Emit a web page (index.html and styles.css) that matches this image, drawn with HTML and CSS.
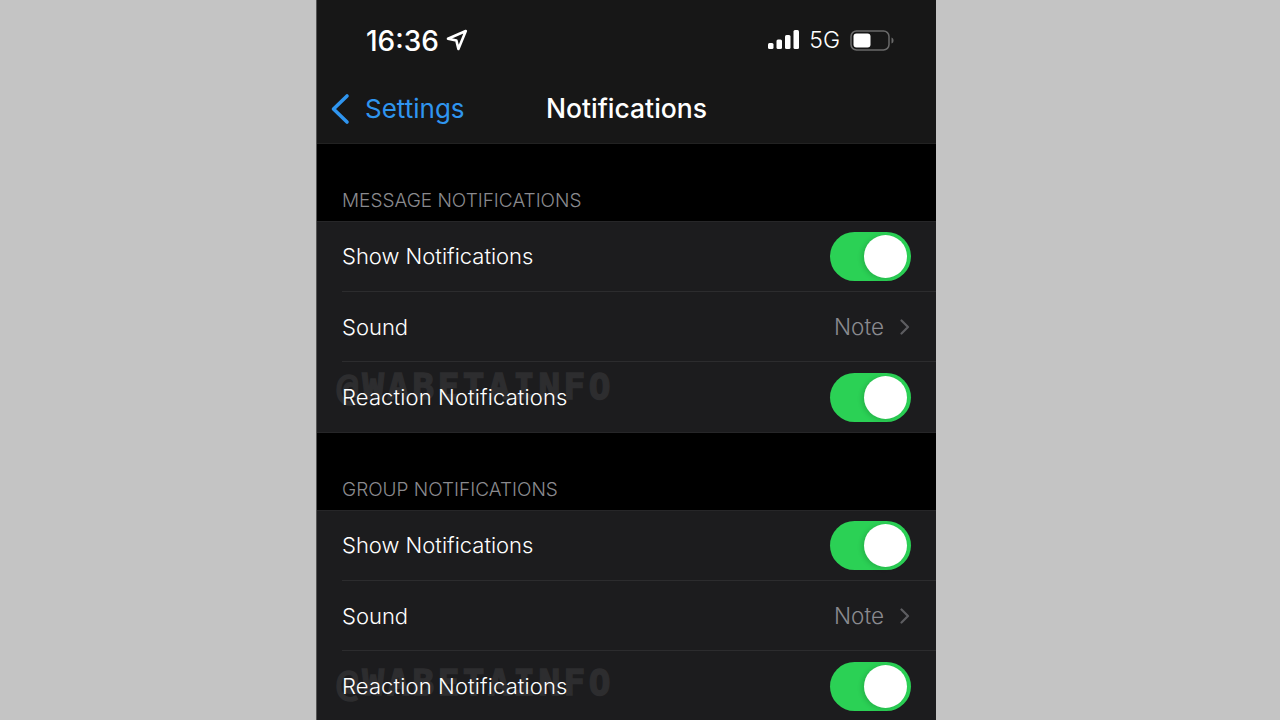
FILE: index.html
```html
<!DOCTYPE html>
<html lang="en">
<head>
    <meta charset="UTF-8">
    <meta name="viewport" content="width=device-width, initial-scale=1.0">
    <title>Notifications</title>
    <link rel="stylesheet" href="styles.css">
</head>
<body>
    <div class="phone">
        <div class="top-bar">
            <div class="status-bar">
                <div class="status-left">
                    <span class="clock">16:36</span>
                    <svg class="location" width="22" height="22" viewBox="0 0 22 22"><path d="M2 9.800 19.800 2 12.400 20 10.400 11.600Z" fill="none" stroke="#fff" stroke-width="2.600" stroke-linejoin="round"/></svg>
                </div>
                <div class="status-right">
                    <svg width="31" height="20" viewBox="0 0 31 20"><rect x="0" y="13" width="5.500" height="6" rx="1.500" fill="#fff"/><rect x="8.500" y="9.500" width="5.500" height="9.500" rx="1.500" fill="#fff"/><rect x="17" y="5" width="5.500" height="14" rx="1.500" fill="#fff"/><rect x="25.500" y="0" width="5.500" height="19" rx="1.500" fill="#fff"/></svg>
                    <span class="network">5G</span>
                    <svg class="battery" width="44" height="21" viewBox="0 0 44 21"><rect x="1" y="1" width="38" height="19" rx="5.500" fill="none" stroke="#6a6a6a" stroke-width="1.500"/><rect x="3.500" y="3.500" width="17" height="14" rx="3" fill="#fff"/><path d="M41.500 7.500c1.500.5 2 1.500 2 3s-.5 2.500-2 3z" fill="#6a6a6a"/></svg>
                </div>
            </div>
            <div class="nav-bar">
                <div class="back">
                    <svg width="20" height="32" viewBox="0 0 20 32"><path d="M17 3 3.500 16 17 29" fill="none" stroke="#2f95ef" stroke-width="3.600" stroke-linecap="round" stroke-linejoin="round"/></svg>
                    <span>Settings</span>
                </div>
                <div class="nav-title">Notifications</div>
            </div>
        </div>

        <div class="section-title">MESSAGE NOTIFICATIONS</div>
        <div class="group">
            <div class="watermark">@WABETAINFO</div>
            <div class="row"><span>Show Notifications</span><div class="switch"><div class="knob"></div></div></div>
            <div class="row"><span>Sound</span><div class="value">Note<svg width="10" height="16" viewBox="0 0 10 16"><path d="M1.500 1.500 8 8l-6.500 6.500" fill="none" stroke="#5d5d61" stroke-width="2.200" stroke-linecap="round" stroke-linejoin="round"/></svg></div></div>
            <div class="row"><span class="wide">Reaction Notifications</span><div class="switch"><div class="knob"></div></div></div>
        </div>

        <div class="section-title">GROUP NOTIFICATIONS</div>
        <div class="group">
            <div class="watermark second">@WABETAINFO</div>
            <div class="row"><span>Show Notifications</span><div class="switch"><div class="knob"></div></div></div>
            <div class="row"><span>Sound</span><div class="value">Note<svg width="10" height="16" viewBox="0 0 10 16"><path d="M1.500 1.500 8 8l-6.500 6.500" fill="none" stroke="#5d5d61" stroke-width="2.200" stroke-linecap="round" stroke-linejoin="round"/></svg></div></div>
            <div class="row"><span class="wide">Reaction Notifications</span><div class="switch"><div class="knob"></div></div></div>
        </div>
    </div>
</body>
</html>
```
FILE: styles.css
```css
body {
    margin: 0;
    height: 720px;
    overflow: hidden;
    background-color: #c4c4c4;
    font-family: Inter, "Liberation Sans", sans-serif;
}

.phone {
    width: 619px;
    height: 720px;
    margin-left: 317px;
    background-color: #000;
    color: #fff;
    overflow: hidden;
    box-shadow: -1px 0 0 #555;
}

/* Top bars */
.top-bar {
    height: 143px;
    background-color: #171717;
    border-bottom: 1px solid #222;
}

.status-bar {
    height: 76px;
    display: flex;
    justify-content: space-between;
    align-items: center;
    padding: 4px 42px 0 49px;
    box-sizing: border-box;
}

.status-left, .status-right {
    display: flex;
    align-items: center;
}

.clock {
    margin-top: 2px;
    font-size: 28px;
    font-weight: 500;
}

.location {
    margin-left: 7px;
}

.network {
    margin: 0 10px 0 10px;
    font-size: 23px;
    font-weight: 300;
}

.nav-bar {
    position: relative;
    height: 67px;
    display: flex;
    align-items: center;
    justify-content: center;
    padding-bottom: 2px;
    box-sizing: border-box;
}

.back {
    position: absolute;
    left: 13px;
    display: flex;
    align-items: center;
    gap: 15px;
    color: #2f95ef;
    font-size: 26px;
}

.nav-title {
    margin-bottom: 2px;
    font-size: 26.500px;
    font-weight: 500;
}

/* Sections */
.section-title {
    height: 77px;
    box-sizing: border-box;
    padding: 46px 0 0 25px;
    color: #8a8a8e;
    font-size: 19px;
    font-weight: 300;
    line-height: 22px;
}

.group {
    position: relative;
    background-color: #1c1c1e;
    border-top: 1px solid #262628;
    border-bottom: 1px solid #262628;
    padding-left: 25px;
}

.row {
    display: flex;
    justify-content: space-between;
    align-items: center;
    height: 69px;
    padding-right: 25px;
    border-bottom: 1px solid #2c2c2e;
    font-size: 22px;
    font-weight: 350;
}

.row:last-child {
    height: 70px;
    border-bottom: none;
}

.value {
    display: flex;
    align-items: center;
    gap: 16px;
    margin-right: 1px;
    color: #8a8a8f;
    font-size: 22.500px;
}

.switch {
    width: 81px;
    height: 49px;
    box-sizing: border-box;
    padding: 3px;
    display: flex;
    justify-content: flex-end;
    border-radius: 25px;
    background-color: #2bd155;
}

.knob {
    width: 43px;
    height: 43px;
    margin-right: 1px;
    border-radius: 50%;
    background-color: #fff;
    box-shadow: -2px 1px 5px rgba(0, 0, 0, 0.15);
}

/* Watermark sits over the rows */
.watermark {
    position: absolute;
    left: 20px;
    top: 145px;
    color: #2d2d2f;
    font-family: "DejaVu Sans Mono", monospace;
    font-size: 36px;
    font-weight: bold;
    letter-spacing: 3.500px;
    line-height: 40px;
    white-space: nowrap;
    -webkit-text-stroke: 1.500px #2d2d2f;
}

.watermark.second {
    top: 152px;
}

.row span {
    position: relative;
}

.row span.wide {
    letter-spacing: 0.130px;
}

.watermark + .row span {
    margin-bottom: 2px;
}
```
